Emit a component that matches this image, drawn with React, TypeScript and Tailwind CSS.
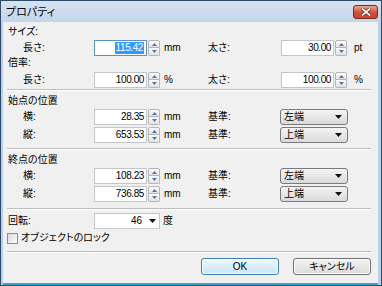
import React from 'react';

const txt = "text-[10px] leading-[12px] text-black";

function Spinner() {
  return (
    <div className="ml-[1px] flex h-[16px] w-[12px] flex-col">
      <div className="flex h-[8px] items-center justify-center rounded-t-[2px] border border-[#b5b5b5] bg-gradient-to-b from-[#fbfbfb] to-[#e3e3e3]">
        <svg width="5" height="3" viewBox="0 0 5 3">
          <path d="M0 3L2.5 0L5 3Z" fill="#4f74a8" />
        </svg>
      </div>
      <div className="flex h-[8px] items-center justify-center rounded-b-[2px] border border-t-0 border-[#b5b5b5] bg-gradient-to-b from-[#fbfbfb] to-[#e3e3e3]">
        <svg width="5" height="3" viewBox="0 0 5 3">
          <path d="M0 0L5 0L2.5 3Z" fill="#4f74a8" />
        </svg>
      </div>
    </div>
  );
}

function NumBox({ value, selected }: { value: string; selected?: boolean }) {
  return (
    <div className="flex items-center">
      <div
        className={`flex h-[16px] w-[53px] items-center justify-end border bg-white pr-[2px] ${
          selected ? 'border-[#5b8fc4]' : 'border-[#c3c6cd]'
        }`}
      >
        <span
          className={`text-[10px] leading-[12px] tracking-[-0.4px] ${
            selected ? 'bg-[#3399ff] px-[1px] text-white' : 'text-black'
          }`}
        >
          {value}
        </span>
      </div>
      <Spinner />
    </div>
  );
}

function Select({ value }: { value: string }) {
  return (
    <div className="flex h-[16px] w-[68px] items-center justify-between rounded-[3px] border border-[#7a7a7a] bg-gradient-to-b from-[#f4f4f4] to-[#dadada] pl-[3px] pr-[5px]">
      <span className={txt}>{value}</span>
      <svg width="7" height="4" viewBox="0 0 7 4">
        <path d="M0 0H7L3.5 4Z" fill="#111" />
      </svg>
    </div>
  );
}

function FieldRow({
  label,
  value,
  unit,
  rlabel,
  rvalue,
  runit,
  selected,
}: {
  label: string;
  value: string;
  unit: string;
  rlabel: string;
  rvalue: string;
  runit: string;
  selected?: boolean;
}) {
  return (
    <div className="flex h-[16px] items-center">
      <div className="flex w-[201px] items-center">
        <span className={`w-[87px] pl-[16px] ${txt}`}>{label}</span>
        <NumBox value={value} selected={selected} />
        <span className={`ml-[4px] ${txt}`}>{unit}</span>
      </div>
      <span className={`w-[73px] ${txt}`}>{rlabel}</span>
      <NumBox value={rvalue} />
      <span className={`ml-[7px] ${txt}`}>{runit}</span>
    </div>
  );
}

function PosRow({ label, value, anchor }: { label: string; value: string; anchor: string }) {
  return (
    <div className="flex h-[16px] items-center">
      <div className="flex w-[201px] items-center">
        <span className={`w-[87px] pl-[16px] ${txt}`}>{label}</span>
        <NumBox value={value} />
        <span className={`ml-[4px] ${txt}`}>mm</span>
      </div>
      <span className={`w-[72px] ${txt}`}>基準:</span>
      <Select value={anchor} />
    </div>
  );
}

function Sep({ className = '' }: { className?: string }) {
  return <div className={`h-[2px] border-t border-b border-t-[#bdbdbd] border-b-white ${className}`} />;
}

function Section({ title, rows }: { title: string; rows: { label: string; value: string; anchor: string }[] }) {
  return (
    <div className="flex flex-col">
      <div className={`mt-[4px] ml-[1px] h-[12px] ${txt}`}>{title}</div>
      <div className="mt-[2px] flex flex-col gap-[2px]">
        {rows.map((r) => (
          <PosRow key={r.label} {...r} />
        ))}
      </div>
    </div>
  );
}

export default function App() {
  return (
    <div className="flex h-[286px] w-[382px] flex-col border border-[#2e4b69] bg-[#b9cfe7] font-['Liberation_Sans','Noto_Sans_CJK_JP',sans-serif] [font-feature-settings:'palt']">
      {/* title bar */}
      <div className="flex h-[21px] items-center justify-between bg-gradient-to-b from-[#d6e3f1] to-[#c3d5ea] pl-[5px] pr-[3px]">
        <span className="text-[11px] leading-[14px] text-black">プロパティ</span>
        <div className="mt-[1px] flex h-[14px] w-[25px] items-center justify-center rounded-[3px] border border-[#7d2a1e] bg-gradient-to-b from-[#e8a796] via-[#d0553f] to-[#c8452f]">
          <svg width="10" height="8" viewBox="0 0 10 8">
            <path d="M1.5 1L8.5 7M8.5 1L1.5 7" stroke="#5a1a12" strokeWidth="3.2" strokeLinecap="square" />
            <path d="M1.5 1L8.5 7M8.5 1L1.5 7" stroke="#ffffff" strokeWidth="1.8" strokeLinecap="square" />
          </svg>
        </div>
      </div>

      {/* client */}
      <div className="ml-[2px] mr-[3px] flex flex-1 flex-col border-b-[2px] border-b-[#3aa3cf] bg-[#f0f0f0] pl-[4px] pr-[7px]">
        <div className={`mt-[4px] ml-[1px] h-[12px] ${txt}`}>サイズ:</div>
        <div className="mt-[2px]">
          <FieldRow label="長さ:" value="115.42" unit="mm" rlabel="太さ:" rvalue="30.00" runit="pt" selected />
        </div>
        <div className={`mt-[1px] ml-[1px] h-[12px] ${txt}`}>倍率:</div>
        <div className="mt-[3px]">
          <FieldRow label="長さ:" value="100.00" unit="%" rlabel="太さ:" rvalue="100.00" runit="%" />
        </div>
        <Sep className="mt-[1px]" />

        <Section
          title="始点の位置"
          rows={[
            { label: '横:', value: '28.35', anchor: '左端' },
            { label: '縦:', value: '653.53', anchor: '上端' },
          ]}
        />
        <Sep className="mt-[5px]" />

        <Section
          title="終点の位置"
          rows={[
            { label: '横:', value: '108.23', anchor: '左端' },
            { label: '縦:', value: '736.85', anchor: '上端' },
          ]}
        />
        <Sep className="mt-[6px]" />

        <div className="mt-[3px] flex h-[16px] items-center">
          <span className={`ml-[1px] w-[86px] ${txt}`}>回転:</span>
          <div className="flex h-[16px] w-[66px] items-center justify-end border border-[#c3c6cd] bg-white pr-[3px]">
            <span className="text-[10px] leading-[12px] text-black">46</span>
            <svg className="ml-[7px]" width="7" height="4" viewBox="0 0 7 4">
              <path d="M0 0H7L3.5 4Z" fill="#111" />
            </svg>
          </div>
          <span className={`ml-[3px] ${txt}`}>度</span>
        </div>

        <div className="mt-[3px] flex h-[12px] items-center">
          <div className="h-[11px] w-[11px] border border-[#8e8f8f] bg-gradient-to-br from-[#dcdcdc] to-[#fbfbfb]" />
          <span className={`ml-[3px] ${txt}`}>オブジェクトのロック</span>
        </div>

        <Sep className="mt-[7px]" />

        <div className="mt-[5px] flex justify-end gap-[14px]">
          <div className="flex h-[17px] w-[78px] items-center justify-center rounded-[3px] border border-[#3c7fb1] bg-gradient-to-b from-[#eef7fd] to-[#c9e6f7] shadow-[inset_0_0_0_1px_#ffffff]">
            <span className={txt}>OK</span>
          </div>
          <div className="flex h-[17px] w-[78px] items-center justify-center rounded-[3px] border border-[#707070] bg-gradient-to-b from-[#f3f3f3] to-[#dadada] shadow-[inset_0_0_0_1px_#fcfcfc]">
            <span className={txt}>キャンセル</span>
          </div>
        </div>
      </div>
    </div>
  );
}
